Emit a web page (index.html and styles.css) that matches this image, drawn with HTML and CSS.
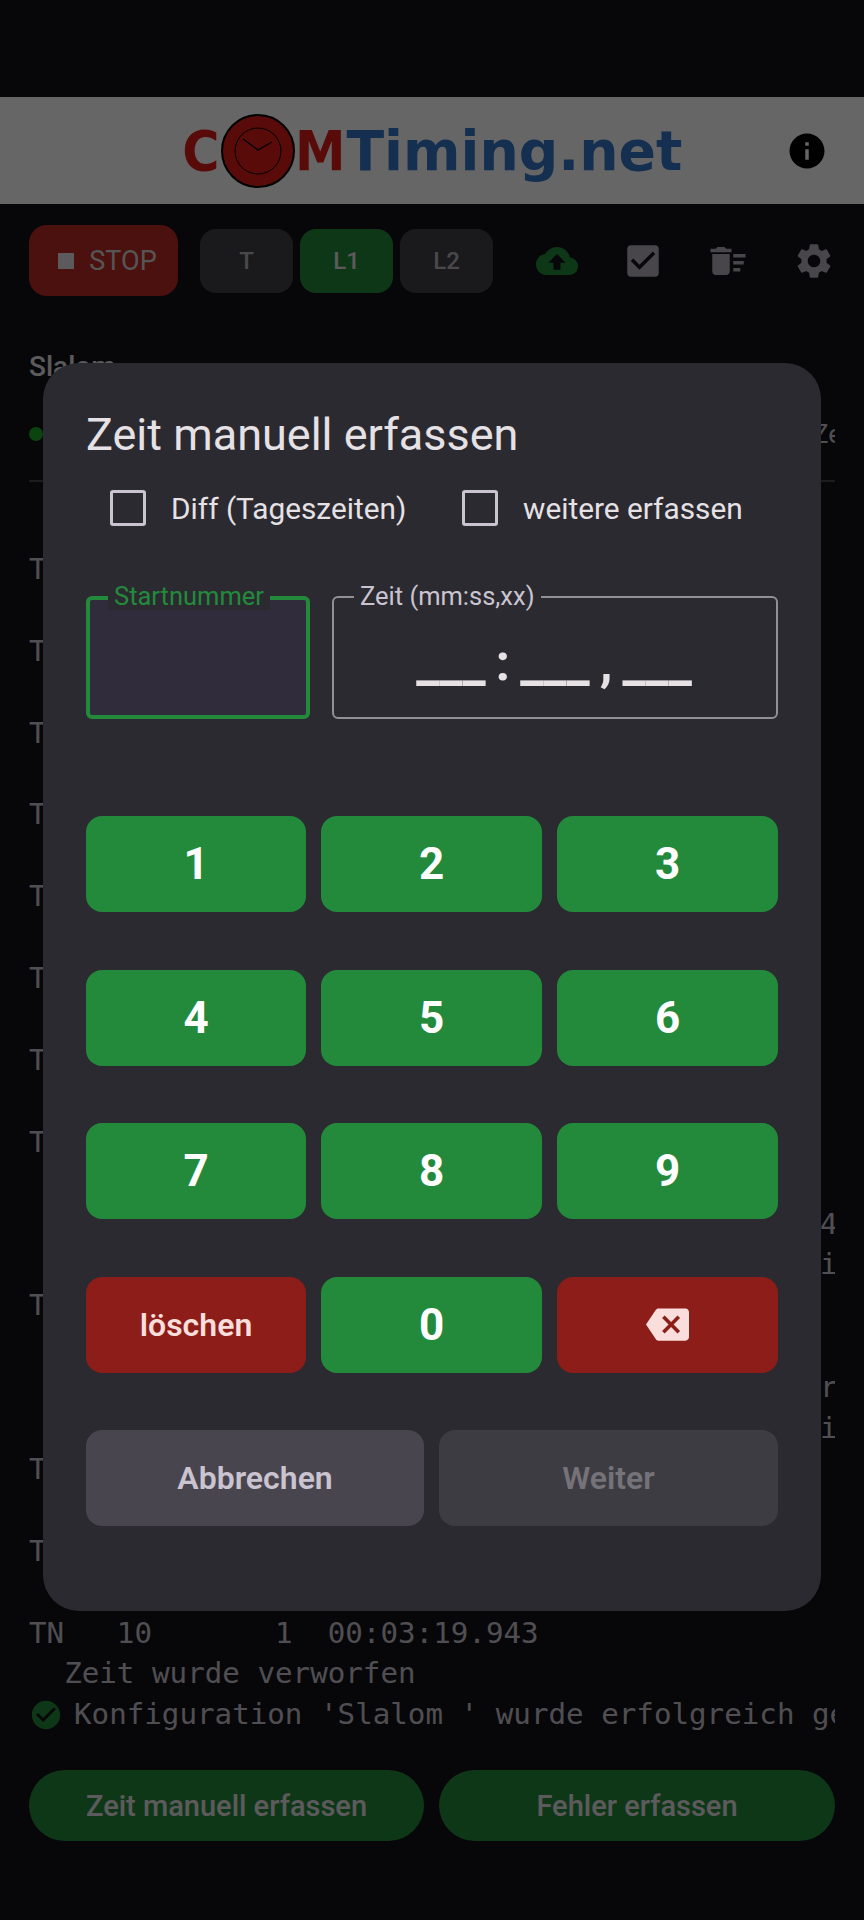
FILE: index.html
```html
<!DOCTYPE html>
<html lang="de">
<head>
<meta charset="utf-8">
<title>COMTiming.net</title>
<link rel="stylesheet" href="styles.css">
</head>
<body>
<div class="page">
  <div class="statusbar"></div>
  <header class="header">
    <div class="logo">
      <span class="logo-red logo-c">C</span>
      <svg class="clock" viewBox="0 0 74 74">
        <circle cx="37" cy="37" r="36" fill="#dc1c17" stroke="#000" stroke-width="2"/>
        <circle cx="37" cy="37" r="23" fill="none" stroke="#000" stroke-width="1"/>
        <path d="M22 25L37 36L51 28" fill="none" stroke="#000" stroke-width="1.3"/>
      </svg>
      <span class="logo-red logo-m">M</span><span class="logo-blue">Timing.net</span>
    </div>
    <svg class="info" viewBox="0 0 24 24"><path d="M12 2C6.48 2 2 6.48 2 12s4.48 10 10 10 10-4.48 10-10S17.52 2 12 2zm1 15h-2v-6h2v6zm0-8h-2V7h2v2z"/></svg>
  </header>
  <div class="toolbar">
    <button class="stop"><span class="stop-square"></span>STOP</button>
    <div class="tabs">
      <button class="tab">T</button>
      <button class="tab tab-on">L1</button>
      <button class="tab">L2</button>
    </div>
    <div class="tools">
      <svg class="tool tool-green" viewBox="0 0 24 24"><path d="M19.35 10.04C18.67 6.59 15.64 4 12 4 9.11 4 6.6 5.64 5.35 8.04 2.34 8.36 0 10.91 0 14c0 3.31 2.69 6 6 6h13c2.76 0 5-2.24 5-5 0-2.64-2.05-4.78-4.65-4.96zM14 13v4h-4v-4H7l5-5 5 5h-3z"/></svg>
      <svg class="tool" viewBox="0 0 24 24"><path d="M19 3H5c-1.11 0-2 .9-2 2v14c0 1.1.89 2 2 2h14c1.11 0 2-.9 2-2V5c0-1.1-.89-2-2-2zm-9 14l-5-5 1.41-1.41L10 14.17l7.59-7.59L19 8l-9 9z"/></svg>
      <svg class="tool" viewBox="0 0 24 24"><path d="M15 16h4v2h-4zm0-8h7v2h-7zm0 4h6v2h-6zM3 18c0 1.1.9 2 2 2h6c1.1 0 2-.9 2-2V8H3v10zM14 5h-3l-1-1H6L5 5H2v2h12z"/></svg>
      <svg class="tool" viewBox="0 0 24 24"><path d="M19.14 12.94c.04-.3.06-.61.06-.94 0-.32-.02-.64-.07-.94l2.03-1.58c.18-.14.23-.41.12-.61l-1.92-3.32c-.12-.22-.37-.29-.59-.22l-2.39.96c-.5-.38-1.03-.7-1.62-.94l-.36-2.54c-.04-.24-.24-.41-.48-.41h-3.84c-.24 0-.43.17-.47.41l-.36 2.54c-.59.24-1.13.57-1.62.94l-2.39-.96c-.22-.08-.47 0-.59.22L2.74 8.87c-.12.21-.08.47.12.61l2.03 1.58c-.05.3-.09.63-.09.94s.02.64.07.94l-2.03 1.58c-.18.14-.23.41-.12.61l1.92 3.32c.12.22.37.29.59.22l2.39-.96c.5.38 1.03.7 1.62.94l.36 2.54c.05.24.24.41.48.41h3.84c.24 0 .44-.17.47-.41l.36-2.54c.59-.24 1.13-.56 1.62-.94l2.39.96c.22.08.47 0 .59-.22l1.92-3.32c.12-.22.07-.47-.12-.61l-2.01-1.58zM12 15.6c-1.98 0-3.6-1.62-3.6-3.6s1.62-3.6 3.6-3.6 3.6 1.62 3.6 3.6-1.62 3.6-3.6 3.6z"/></svg>
    </div>
  </div>
  <div class="race">Slalom</div>
  <div class="status"><span class="dot"></span><span class="status-text">Zeit</span></div>
  <div class="log">
    <div class="row">TN</div><div class="row"></div>
    <div class="row">TN</div><div class="row"></div>
    <div class="row">TN</div><div class="row"></div>
    <div class="row">TN</div><div class="row"></div>
    <div class="row">TN</div><div class="row"></div>
    <div class="row">TN</div><div class="row"></div>
    <div class="row">TN</div><div class="row"></div>
    <div class="row">TN</div><div class="row"></div>
    <div class="row row-end">4</div>
    <div class="row row-end">i</div>
    <div class="row">TN</div><div class="row"></div>
    <div class="row row-end">r</div>
    <div class="row row-end">i</div>
    <div class="row">TN</div><div class="row"></div>
    <div class="row">TN</div><div class="row"></div>
    <div class="row">TN   10       1  00:03:19.943</div>
    <div class="row">  Zeit wurde verworfen</div>
    <div class="row row-ok">
      <svg class="ok" viewBox="0 0 24 24"><path d="M12 2C6.48 2 2 6.48 2 12s4.48 10 10 10 10-4.48 10-10S17.52 2 12 2zm-2 15l-5-5 1.41-1.41L10 14.17l7.59-7.59L19 8l-9 9z"/></svg>
      <span>Konfiguration 'Slalom ' wurde erfolgreich gespeichert</span>
    </div>
  </div>
  <div class="actions">
    <button class="pill pill-left">Zeit manuell erfassen</button>
    <button class="pill pill-right">Fehler erfassen</button>
  </div>
</div>

<div class="scrim"></div>

<section class="dialog">
  <h2 class="title">Zeit manuell erfassen</h2>
  <div class="checks">
    <label class="check"><span class="box"></span>Diff (Tageszeiten)</label>
    <label class="check"><span class="box"></span>weitere erfassen</label>
  </div>
  <div class="fields">
    <div class="field field-start"><span class="legend legend-start">Startnummer</span></div>
    <div class="field field-time">
      <span class="legend legend-time">Zeit (mm:ss,xx)</span>
      <div class="mask"><span>___</span><span>:</span><span>___</span><span>,</span><span>___</span></div>
    </div>
  </div>
  <div class="pad">
    <button class="key">1</button><button class="key">2</button><button class="key">3</button>
    <button class="key">4</button><button class="key">5</button><button class="key">6</button>
    <button class="key">7</button><button class="key">8</button><button class="key">9</button>
    <button class="key key-red key-text">löschen</button>
    <button class="key">0</button>
    <button class="key key-red"><svg class="back" viewBox="0 0 24 24"><path d="M22 3H7c-.69 0-1.23.35-1.59.88L0 12l5.41 8.11c.36.53.9.89 1.59.89h15c1.1 0 2-.9 2-2V5c0-1.1-.9-2-2-2zm-3 12.59L17.59 17 14 13.41 10.41 17 9 15.59 12.59 12 9 8.41 10.41 7 14 10.59 17.59 7 19 8.41 15.41 12 19 15.59z"/></svg></button>
  </div>
  <div class="dialog-actions">
    <button class="act act-cancel">Abbrechen</button>
    <button class="act act-next">Weiter</button>
  </div>
</section>
</body>
</html>
```

FILE: styles.css
```css
* { box-sizing: border-box; }
html, body { margin: 0; height: 1920px; overflow: hidden; background: #121218; }
body { position: relative; font-family: Roboto, sans-serif; color: #e6e1e5; }
button { border: 0; font-family: inherit; padding: 0; }

.page { display: flex; flex-direction: column; height: 1920px; }
.page > * { flex: none; }
.statusbar { height: 97px; background: #121218; }
.header { height: 107px; background: #fff; display: flex; align-items: center; padding-left: 183px; position: relative; }
.logo { display: flex; align-items: center; font: bold 55.2px "DejaVu Sans", sans-serif; }
.logo-red { color: #dc1c17; display: inline-block; transform: scaleX(.92); }
.logo-c { transform-origin: right center; margin-left: -4px; }
.logo-m { transform-origin: left center; margin-right: -3px; }
.logo-blue { color: #3576c8; }
.clock { width: 74px; height: 74px; margin: 0 0 0 1px; }
.info { position: absolute; left: 786px; top: 33px; width: 42px; height: 42px; fill: #000; }

.toolbar { display: flex; align-items: center; height: 71px; margin: 21px 29px 0; }
.stop { width: 149px; height: 71px; border-radius: 18px; background: #bc2b26; color: #d8d4d8; font-size: 27px; display: flex; align-items: center; justify-content: center; gap: 15px; padding-left: 8px; }
.stop-square { width: 16px; height: 16px; background: #e6e1e5; }
.tabs { display: flex; gap: 7px; margin-left: 22px; }
.tab { width: 93px; height: 64px; border-radius: 16px; background: #424148; color: #b8b4bc; font-size: 24px; font-weight: 500; margin-top: 1px; }
.tab-on { background: #238a3c; color: #e6e1e5; }
.tools { display: flex; gap: 43.6px; margin-left: 43px; }
.tool { width: 42px; height: 42px; fill: #b4b0b8; display: block; }
.tool-green { fill: #238a3c; }

.race { margin: 51px 29px 0; font-size: 28px; font-weight: 500; line-height: 40px; }
.status { display: flex; align-items: center; height: 46px; margin: 24px 29px 0; font-size: 26px; overflow: hidden; white-space: nowrap; }
.status-text { color: #c8c4cc; margin-left: 770px; }
.dot { width: 14px; height: 14px; border-radius: 50%; background: #1faa2a; flex: none; }

.log { margin: 23px 29px 0; padding-top: 67px; border-top: 2px solid #48464e; font: 29.2px/40.92px "DejaVu Sans Mono", monospace; color: #c8c4cc; overflow: hidden; }
.row { height: 40.92px; white-space: pre; }
.row-end { padding-left: 791px; }
.row-ok { display: flex; align-items: center; gap: 11px; }
.ok { width: 34px; height: 34px; fill: #238a3c; flex: none; }

.actions { display: flex; gap: 15px; margin: 35px 29px 0; }
.pill { height: 71px; border-radius: 36px; background: #238a3c; color: #e6e1e5; font-size: 29px; font-weight: 500; }
.pill-left { flex: 395 1 0; }
.pill-right { flex: 396 1 0; }

.scrim { position: absolute; inset: 0; background: rgba(0,0,0,.6); }

.dialog { position: absolute; left: 43px; top: 363px; width: 778px; height: 1248px; border-radius: 36px; background: #2b2a30; padding: 0 43px; display: flex; flex-direction: column; }
.title { margin: 44px 0 0; font-size: 45px; font-weight: 400; line-height: 56px; }
.checks { display: flex; height: 44px; margin-top: 23px; align-items: center; font-size: 29.8px; }
.check { display: flex; align-items: center; gap: 25px; }
.check:first-child { margin-left: 24px; width: 352px; }
.box { width: 36px; height: 36px; border: 3px solid #cac4d0; border-radius: 3px; flex: none; }

.fields { display: flex; gap: 22px; margin-top: 66px; }
.field { position: relative; height: 123px; border-radius: 6px; }
.field-start { width: 224px; background: #302c3c; border: 4px solid #238a3c; }
.field-time { width: 446px; border: 2px solid #938f99; display: flex; align-items: center; justify-content: center; }
.legend { position: absolute; top: -16px; line-height: 28px; font-size: 25.5px; padding: 0 6px; background: #2b2a30; }
.legend-start { left: 18px; top: -18px; color: #238a3c; }
.legend-time { left: 20px; color: #cac4d0; }
.mask { display: flex; gap: 10px; font-size: 52px; font-weight: 700; line-height: 60px; margin: 11px 2px 0 0; }

.pad { display: grid; grid-template-columns: 220fr 221fr 221fr; gap: 57.5px 15px; margin-top: 97px; }
.key { height: 96px; border-radius: 16px; background: #238a3c; color: #fff; font-size: 44px; font-weight: 700; display: flex; align-items: center; justify-content: center; }
.key-red { background: #8c1d18; color: #f9dedc; }
.key-text { font-size: 32px; font-weight: 600; }
.back { width: 43px; height: 43px; fill: #f9dedc; }

.dialog-actions { display: flex; gap: 15px; margin-top: 57px; }
.act { height: 96px; border-radius: 16px; font-size: 32px; font-weight: 600; }
.act-cancel { flex: 338 1 0; background: #49454f; color: #cac4d0; }
.act-next { flex: 339 1 0; background: #3d3c42; color: #75727a; }
```
